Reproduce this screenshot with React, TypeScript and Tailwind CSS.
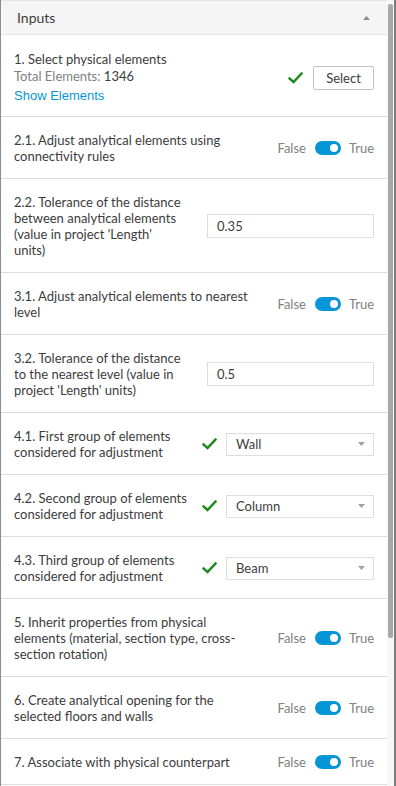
import React from "react";

const FONT = { fontFamily: "Lato, 'Noto Sans', sans-serif" };

function Check() {
  return (
    <svg width="15" height="12" viewBox="0 0 15 12" className="shrink-0">
      <polyline points="1.5,6.5 5.5,10 13.5,1.5" fill="none" stroke="#1f8a1f" strokeWidth="2.4" strokeLinecap="square" />
    </svg>
  );
}

function Toggle() {
  return (
    <div className="flex items-center text-[#808080]">
      <span>False</span>
      <div className="ml-[9px] mr-[8px] w-[26px] h-[14px] rounded-full bg-[#0696d7] flex items-center justify-end pr-[3px]">
        <div className="w-[8px] h-[8px] rounded-full bg-white" />
      </div>
      <span>True</span>
    </div>
  );
}

function ToggleRow({ label }: { label: string }) {
  return (
    <div className="flex items-center px-[13px] pt-[15px] pb-[14px] border-b border-[#dcdcdc]">
      <div className="w-[242px] shrink-0">{label}</div>
      <div className="ml-auto">
        <Toggle />
      </div>
    </div>
  );
}

function InputRow({ label, value }: { label: string; value: string }) {
  return (
    <div className="flex items-center px-[13px] pt-[15px] pb-[14px] border-b border-[#dcdcdc]">
      <div className="w-[168px] shrink-0">{label}</div>
      <div className="ml-auto w-[167px] h-[24px] border border-[#dedede] flex items-center pl-[9px] text-[#3c3c3c]">
        {value}
      </div>
    </div>
  );
}

function DropRow({ label, value }: { label: string; value: string }) {
  return (
    <div className="flex items-center px-[13px] pt-[15px] pb-[14px] border-b border-[#dcdcdc]">
      <div className="w-[180px] shrink-0">{label}</div>
      <div className="ml-auto flex items-center">
        <Check />
        <div className="ml-[9px] w-[148px] h-[23px] border border-[#dedede] flex items-center pl-[9px] pr-[8px] justify-between">
          <span>{value}</span>
          <svg width="7" height="4" viewBox="0 0 7 4"><polygon points="0,0 7,0 3.5,4" fill="#a0a0a0" /></svg>
        </div>
      </div>
    </div>
  );
}

export default function App() {
  return (
    <div className="w-[396px] h-[786px] bg-white flex overflow-hidden text-[13px] leading-[16px] text-[#3c3c3c]" style={FONT}>
      <div className="w-[1px] bg-[#8c8c8c] shrink-0" />
      <div className="flex-1 min-w-0 flex flex-col">
        <div className="h-[35px] shrink-0 bg-[#f5f5f5] border-t border-[#e6e6e6] border-b border-[#dcdcdc] flex items-center justify-between pl-[16px] pr-[17px]">
          <span className="text-[14px]">Inputs</span>
          <svg width="7" height="4" viewBox="0 0 7 4"><polygon points="0,4 7,4 3.5,0" fill="#8a8a8a" /></svg>
        </div>
        <div className="flex items-center px-[13px] pt-[16px] pb-[12px] border-b border-[#dcdcdc]">
          <div className="flex flex-col">
            <span>1. Select physical elements</span>
            <span className="text-[#808080] mt-[1px]">
              Total Elements: <span className="text-[#3c3c3c]">1346</span>
            </span>
            <span className="mt-[4px] text-[#0696d7]" style={{ fontFamily: "'Liberation Sans', Arial, sans-serif" }}>
              Show Elements
            </span>
          </div>
          <div className="ml-auto flex items-center">
            <Check />
            <div className="ml-[10px] w-[61px] h-[24px] border border-[#c4c4c4] rounded-[2px] flex items-center justify-center">
              Select
            </div>
          </div>
        </div>
        <ToggleRow label="2.1. Adjust analytical elements using connectivity rules" />
        <InputRow label="2.2. Tolerance of the distance between analytical elements (value in project 'Length' units)" value="0.35" />
        <ToggleRow label="3.1. Adjust analytical elements to nearest level" />
        <InputRow label="3.2. Tolerance of the distance to the nearest level (value in project 'Length' units)" value="0.5" />
        <DropRow label="4.1. First group of elements considered for adjustment" value="Wall" />
        <DropRow label="4.2. Second group of elements considered for adjustment" value="Column" />
        <DropRow label="4.3. Third group of elements considered for adjustment" value="Beam" />
        <ToggleRow label="5. Inherit properties from physical elements (material, section type, cross-section rotation)" />
        <ToggleRow label="6. Create analytical opening for the selected floors and walls" />
        <ToggleRow label="7. Associate with physical counterpart" />
      </div>
      <div className="w-[7px] shrink-0 bg-[#f7f7f7] relative">
        <div className="absolute left-[1px] top-[4px] w-[5px] h-[634px] rounded-[2px] bg-[#a8a8a8]" />
      </div>
      <div className="w-[2px] bg-[#7c7c7c] shrink-0" />
    </div>
  );
}
